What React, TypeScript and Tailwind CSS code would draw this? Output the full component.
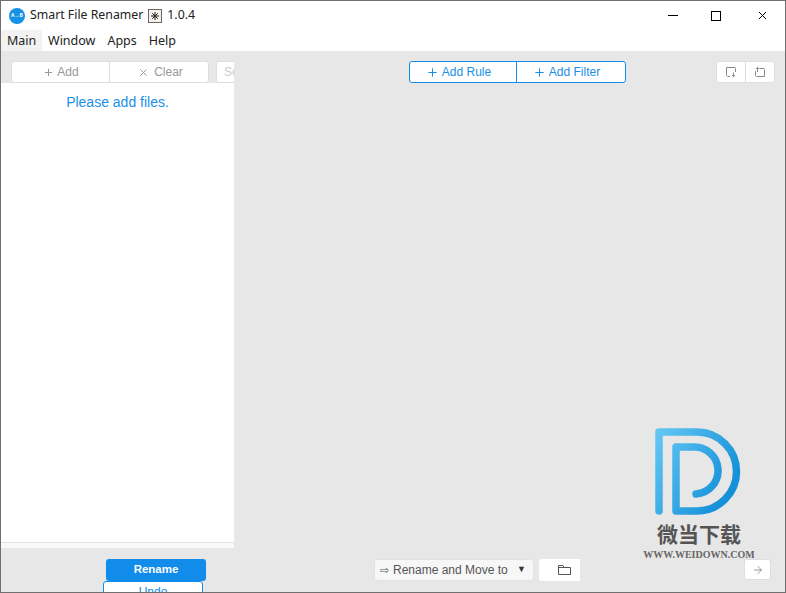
import React from 'react';
import { Plus, X, ArrowRight } from 'lucide-react';

function AppIcon() {
  return (
    <div className="w-[16px] h-[16px] rounded-full bg-[#1592e6] flex items-center justify-center text-white text-[5px] font-bold leading-none">
      A→B
    </div>
  );
}

function StarBox() {
  return (
    <svg width="14" height="14" viewBox="0 0 14 14" className="mx-[5px]">
      <rect x="0.5" y="0.5" width="13" height="13" fill="#f4f1ea" stroke="#666" />
      <path d="M7 3v8M3 7h8M4.200 4.200l5.600 5.600M9.800 4.200l-5.600 5.600" stroke="#222" strokeWidth="1" />
    </svg>
  );
}

function WindowControls() {
  return (
    <div className="ml-auto flex items-center text-black">
      <div className="w-[45px] flex justify-center">
        <div className="w-[10px] h-px bg-black" />
      </div>
      <div className="w-[45px] flex justify-center pr-[3px]">
        <div className="w-[10px] h-[10px] border border-black" />
      </div>
      <div className="w-[45px] flex justify-center pr-[1px]">
        <X size={13} strokeWidth={1} absoluteStrokeWidth />
      </div>
    </div>
  );
}

function Menu() {
  const items = ['Window', 'Apps', 'Help'];
  return (
    <div className="h-[21px] bg-white flex items-center text-[12.5px] text-[#222]">
      <div className="h-full w-[41px] pl-[6px] pt-[2px] bg-[#f2f2f2] rounded-tr-[3px] flex items-center">Main</div>
      <div className="flex gap-[12px] pl-[6px] pt-[2px]">
        {items.map((m) => (
          <span key={m}>{m}</span>
        ))}
      </div>
    </div>
  );
}

function WatermarkLogo() {
  return (
    <div className="absolute left-[642px] top-[426px] w-[112px] flex flex-col items-center pointer-events-none">
      <svg width="90" height="90" viewBox="0 0 90 90" className="self-start ml-[9px]">
        <defs>
          <linearGradient id="dlogo" x1="0" y1="0" x2="1" y2="0.6">
            <stop offset="0" stopColor="#62c6f3" />
            <stop offset="1" stopColor="#1390d8" />
          </linearGradient>
        </defs>
        <path
          d="M7 84V5H45A39.5 39.5 0 0 1 45 84H24V20H41A23.500 23.500 0 0 1 44 67"
          fill="none"
          stroke="url(#dlogo)"
          strokeWidth="7.500"
          strokeLinecap="round"
          strokeLinejoin="round"
        />
      </svg>
      <div className="mt-[4px] text-[21px] leading-[25px] font-bold text-[#555] whitespace-nowrap font-['Noto_Sans_CJK_SC',sans-serif]">
        微当下载
      </div>
      <div className="mt-[3px] text-[10px] leading-[12px] font-bold text-[#666] whitespace-nowrap font-['Liberation_Serif',serif]">
        WWW.WEIDOWN.COM
      </div>
    </div>
  );
}

export default function App() {
  return (
    <div className="relative w-[786px] h-[593px] overflow-hidden border border-[#6f6f6f] bg-[#e7e7e7] flex flex-col font-['Liberation_Sans',sans-serif]">
      <div className="h-[29px] shrink-0 bg-white flex items-center pl-[8px] text-[12.3px] text-[#222] font-['Noto_Sans',sans-serif]">
        <AppIcon />
        <span className="ml-[5px]">Smart File Renamer</span>
        <StarBox />
        <span>1.0.4</span>
        <WindowControls />
      </div>
      <div className="shrink-0 font-['Noto_Sans',sans-serif]">
        <Menu />
      </div>

      <div className="flex-1 min-h-0 flex">
        <div className="w-[233px] shrink-0 flex flex-col">
          <div className="h-[32px] pt-[10px] pl-[10px] flex overflow-hidden shrink-0">
            <div className="w-[198px] h-[22px] shrink-0 bg-white border border-[#dedede] rounded-[3px] flex text-[12px] text-[#999]">
              <button className="w-[98px] pl-[1px] flex items-center justify-center gap-[3px] border-r border-[#dcdcdc]">
                <Plus size={11} strokeWidth={1} absoluteStrokeWidth />
                Add
              </button>
              <button className="flex-1 pl-[3px] flex items-center justify-center gap-[5px]">
                <X size={11} strokeWidth={1} absoluteStrokeWidth />
                Clear
              </button>
            </div>
            <div className="w-[60px] h-[22px] ml-[7px] shrink-0 bg-white border border-[#dedede] rounded-[3px] pl-[7px] text-[12px] leading-[20px] text-[#ccc]">
              Search
            </div>
          </div>
          <div className="h-[465px] shrink-0 bg-white flex flex-col">
            <div className="flex-1 pt-[10px] text-center text-[14px] leading-[18px] text-[#1a8fe8]">
              Please add files.
            </div>
            <div className="h-[6px] bg-[#f9f9f9] border-t border-[#e2e2e2]" />
          </div>
          <div className="pt-[11px] flex flex-col">
            <button className="ml-[105px] w-[100px] h-[22px] bg-[#128ceb] rounded-[3px] text-white text-[11.5px] font-bold">
              Rename
            </button>
            <button className="ml-[102px] w-[100px] h-[22px] bg-white border border-[#128ceb] rounded-[3px] text-[#128ceb] text-[12px]">
              Undo
            </button>
          </div>
        </div>

        <div className="flex-1 min-w-0 flex flex-col">
          <div className="h-[32px] pt-[10px] pl-[175px] pr-[10px] flex shrink-0">
            <div className="w-[217px] h-[22px] bg-white border border-[#128ceb] rounded-[3px] flex text-[12px] text-[#1a8fe8]">
              <button className="w-[107px] pr-[9px] flex items-center justify-center gap-[3px] border-r border-[#128ceb]">
                <Plus size={13} strokeWidth={1} absoluteStrokeWidth />
                Add Rule
              </button>
              <button className="flex-1 pr-[9px] flex items-center justify-center gap-[3px]">
                <Plus size={13} strokeWidth={1} absoluteStrokeWidth />
                Add Filter
              </button>
            </div>
            <div className="ml-auto w-[59px] h-[22px] bg-white border border-[#dedede] rounded-[3px] flex">
              <div className="w-[29px] flex items-center justify-center border-r border-[#dedede]">
                <svg width="12" height="12" viewBox="0 0 12 12" fill="none" stroke="#888">
                  <path d="M5 10.500H2.500L1.500 9.500V1.500H10L10.500 2.500V6" />
                  <path d="M8.500 6.500V10.500M6.800 9l1.700 1.700L10.200 9" />
                </svg>
              </div>
              <div className="flex-1 flex items-center justify-center">
                <svg width="12" height="12" viewBox="0 0 12 12" fill="none" stroke="#888">
                  <path d="M5.500 2.500H10L10.500 3.500V10.500H2.500L1.500 9.500V5" />
                  <path d="M3.500 6V1.500M1.800 3l1.700-1.700L5.200 3" />
                </svg>
              </div>
            </div>
          </div>
          <div className="flex-1" />
          <div className="h-[33px] pl-[140px] pr-[14px] flex shrink-0">
            <div className="w-[160px] h-[22px] bg-[#f7f7f7] border border-[#e2e2e2] rounded-[3px] flex items-center pl-[5px] pr-[7px] text-[12px] text-[#555]">
              <span className="text-[11px] w-[13px] shrink-0">⇨</span>
              Rename and Move to
              <span className="ml-auto text-[9px] text-[#333]">▼</span>
            </div>
            <div className="ml-[5px] w-[41px] h-[22px] bg-white rounded-l-[3px] flex items-center justify-center pl-[10px]">
              <svg width="13" height="12" viewBox="0 0 13 12" fill="none" stroke="#555">
                <path d="M0.500 10.500V1.500H5L6 3.500H12.500V10.500Z" />
                <path d="M0.500 3.500H6" />
              </svg>
            </div>
            <div className="ml-auto w-[27px] h-[21px] bg-white border border-[#dedede] rounded-[3px] flex items-center justify-center">
              <ArrowRight size={12} strokeWidth={1} absoluteStrokeWidth color="#999" />
            </div>
          </div>
        </div>
      </div>

      <WatermarkLogo />
    </div>
  );
}
